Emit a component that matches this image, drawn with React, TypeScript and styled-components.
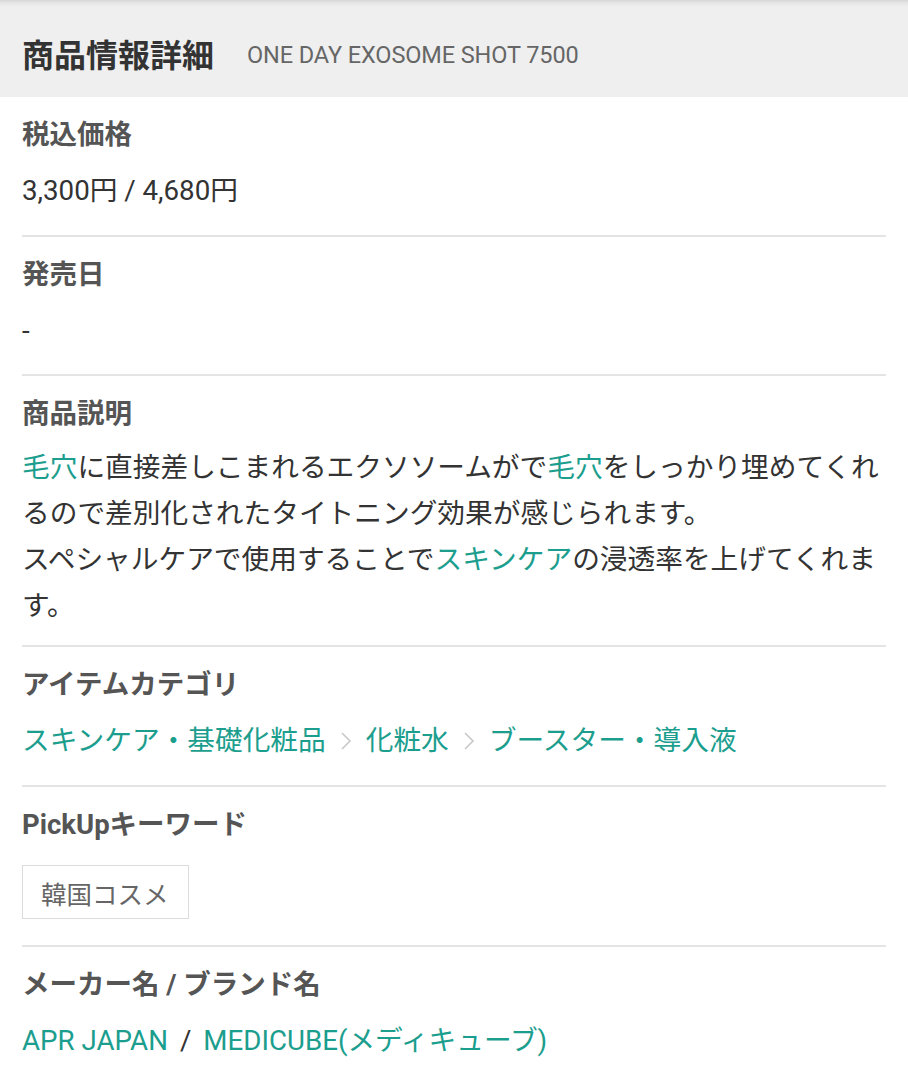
import React from "react";
import styled, { createGlobalStyle } from "styled-components";

const Global = createGlobalStyle`
  html, body { margin: 0; padding: 0; background: #fff; }
  body {
    font-family: Roboto, "Noto Sans CJK JP", "Noto Sans", sans-serif;
    color: #333;
  }
`;

const TEAL = "#1c9e8e";

const Page = styled.div`
  width: 908px;
  background: #fff;
`;

const Header = styled.header`
  height: 97px;
  display: flex;
  align-items: center;
  gap: 33px;
  padding: 14px 22px 0;
  box-sizing: border-box;
  background: linear-gradient(#d6d6d6 0px, #e6e6e6 3px, #efefef 7px, #efefef 100%);
`;

const Title = styled.h1`
  margin: 0;
  font-size: 32px;
  font-weight: 700;
  color: #333;
  line-height: 1;
`;

const Subtitle = styled.span`
  font-family: Roboto, sans-serif;
  font-size: 23.5px;
  color: #666;
  line-height: 1;
  letter-spacing: -0.1px;
`;

const Body = styled.div`
  margin: 0 22px;
`;

const Section = styled.section<{ $last?: boolean; $pb?: number }>`
  padding: 15px 0 ${(p) => p.$pb ?? 21}px;
  border-bottom: ${(p) => (p.$last ? "none" : "2px solid #e4e4e4")};
`;

const Label = styled.h2`
  margin: 0;
  font-size: 27.5px;
  font-weight: 700;
  color: #555;
  line-height: 46px;
`;

const Value = styled.div<{ $mt?: number }>`
  margin-top: ${(p) => p.$mt ?? 10}px;
  font-size: 27.7px;
  line-height: 46px;
  color: #333;
`;

const Link = styled.a`
  color: ${TEAL};
  text-decoration: none;
`;

const Crumbs = styled.div`
  margin-top: 10px;
  display: flex;
  align-items: center;
  font-size: 27.7px;
  line-height: 46px;
`;

const Sep = styled.span`
  display: inline-flex;
  width: 40px;
  justify-content: center;
`;

const TagList = styled.div`
  margin: 17px 0 5px;
  display: flex;
  gap: 12px;
`;

const Tag = styled.span`
  display: inline-flex;
  align-items: center;
  height: 54px;
  box-sizing: border-box;
  padding: 0 19px 0 18px;
  border: 1.5px solid #dcdcdc;
  font-size: 25.5px;
  color: #666;
`;

const Slash = styled.span`
  color: #333;
  margin: 0 12px;
`;

const Chevron = () => (
  <svg width="14" height="20" viewBox="0 0 14 20" fill="none">
    <path d="M3 2 L11 10 L3 18" stroke="#c8c8c8" strokeWidth="1.6" />
  </svg>
);

export default function App() {
  return (
    <Page>
      <Global />
      <Header>
        <Title>商品情報詳細</Title>
        <Subtitle>ONE DAY EXOSOME SHOT 7500</Subtitle>
      </Header>
      <Body>
        <Section>
          <Label>税込価格</Label>
          <Value>3,300円 / 4,680円</Value>
        </Section>
        <Section $pb={20}>
          <Label>発売日</Label>
          <Value>-</Value>
        </Section>
        <Section $pb={16}>
          <Label>商品説明</Label>
          <Value $mt={8}>
            <Link>毛穴</Link>に直接差しこまれるエクソソームがで<Link>毛穴</Link>
            をしっかり埋めてくれるので差別化されたタイトニング効果が感じられます。
            <br />
            スペシャルケアで使用することで<Link>スキンケア</Link>の浸透率を上げてくれます。
          </Value>
        </Section>
        <Section>
          <Label>アイテムカテゴリ</Label>
          <Crumbs>
            <Link>スキンケア・基礎化粧品</Link>
            <Sep>
              <Chevron />
            </Sep>
            <Link>化粧水</Link>
            <Sep>
              <Chevron />
            </Sep>
            <Link>ブースター・導入液</Link>
          </Crumbs>
        </Section>
        <Section>
          <Label>PickUpキーワード</Label>
          <TagList>
            <Tag>韓国コスメ</Tag>
          </TagList>
        </Section>
        <Section $last>
          <Label>メーカー名 / ブランド名</Label>
          <Value>
            <Link>APR JAPAN</Link>
            <Slash>/</Slash>
            <Link>MEDICUBE(メディキューブ)</Link>
          </Value>
        </Section>
      </Body>
    </Page>
  );
}
